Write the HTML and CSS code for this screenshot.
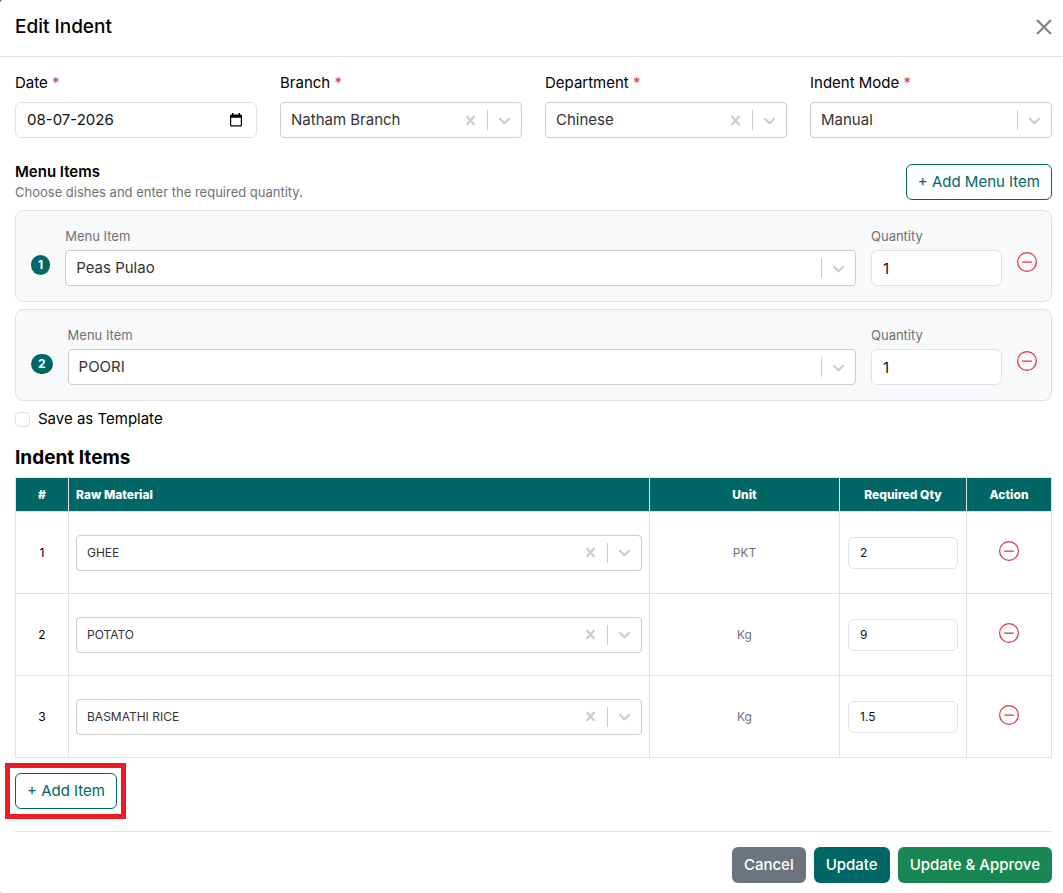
FILE: index.html
```html
<!DOCTYPE html>
<html lang="en">
<head>
<meta charset="utf-8">
<meta name="viewport" content="width=device-width, initial-scale=1">
<title>Edit Indent</title>
<link rel="stylesheet" href="styles.css">
</head>
<body>
<svg class="sprite" aria-hidden="true">
  <symbol id="cross" viewBox="0 0 20 20"><path d="M14.348 14.849c-0.469 0.469-1.229 0.469-1.697 0l-2.651-3.030-2.651 3.029c-0.469 0.469-1.229 0.469-1.697 0-0.469-0.469-0.469-1.229 0-1.697l2.758-3.15-2.759-3.152c-0.469-0.469-0.469-1.228 0-1.697s1.228-0.469 1.697 0l2.652 3.031 2.651-3.031c0.469-0.469 1.228-0.469 1.697 0s0.469 1.229 0 1.697l-2.758 3.152 2.758 3.15c0.469 0.469 0.469 1.229 0 1.698z"/></symbol>
  <symbol id="chevron" viewBox="0 0 20 20"><path d="M4.516 7.548c0.436-0.446 1.043-0.481 1.576 0l3.908 3.747 3.908-3.747c0.533-0.481 1.141-0.446 1.574 0 0.436 0.445 0.408 1.197 0 1.615-0.406 0.418-4.695 4.502-4.695 4.502-0.217 0.223-0.502 0.335-0.787 0.335s-0.57-0.112-0.789-0.335c0 0-4.287-4.084-4.695-4.502s-0.436-1.17 0-1.615z"/></symbol>
  <symbol id="minus-circle" viewBox="0 0 16 16"><path d="M8 15A7 7 0 1 1 8 1a7 7 0 0 1 0 14m0 1A8 8 0 1 0 8 0a8 8 0 0 0 0 16"/><path d="M4 8a.5.5 0 0 1 .5-.5h7a.5.5 0 0 1 0 1h-7A.5.5 0 0 1 4 8"/></symbol>
</svg>
<main class="dialog">
  <header class="dialog-header">
    <h1 class="title">Edit Indent</h1>
    <button class="icon-button close" type="button" aria-label="Close"><svg viewBox="0 0 16 16"><path d="M1 1l14 14M15 1L1 15"/></svg></button>
  </header>
  <form class="dialog-body">
    <div class="fields">
      <div class="field">
        <label for="date">Date <span class="required">*</span></label>
        <div class="control date-control">
          <input id="date" class="bare-input" type="text" value="08-07-2026">
          <button class="icon-button calendar" type="button" aria-label="Choose date"><svg viewBox="0 0 12 14"><path fill-rule="evenodd" d="M2 0h1.5v1.5h5V0H10v1.5h.8q1.2 0 1.2 1.2v9.600q0 1.200-1.200 1.200H1.200Q0 13.500 0 12.300V2.700Q0 1.500 1.200 1.500H2zM1.200 4.800v7.500h9.600V4.800z"/></svg></button>
        </div>
      </div>
      <div class="field">
        <label for="branch">Branch <span class="required">*</span></label>
        <div class="control picker">
          <select id="branch"><option>Natham Branch</option></select>
          <button class="icon-button indicator" type="button" aria-label="Clear branch"><svg><use href="#cross"/></svg></button>
          <span class="divider"></span><span class="indicator"><svg><use href="#chevron"/></svg></span>
        </div>
      </div>
      <div class="field">
        <label for="department">Department <span class="required">*</span></label>
        <div class="control picker">
          <select id="department"><option>Chinese</option></select>
          <button class="icon-button indicator" type="button" aria-label="Clear department"><svg><use href="#cross"/></svg></button>
          <span class="divider"></span><span class="indicator"><svg><use href="#chevron"/></svg></span>
        </div>
      </div>
      <div class="field">
        <label for="mode">Indent Mode <span class="required">*</span></label>
        <div class="control picker">
          <select id="mode"><option>Manual</option></select>
          <span class="divider"></span><span class="indicator"><svg><use href="#chevron"/></svg></span>
        </div>
      </div>
    </div>

    <section class="menu">
      <div class="menu-heading">
        <div>
          <h2 class="menu-title">Menu Items</h2>
          <p class="hint">Choose dishes and enter the required quantity.</p>
        </div>
        <button class="button outline" type="button">+ Add Menu Item</button>
      </div>
      <div class="card">
        <span class="badge">1</span>
        <div class="card-field grow">
          <label for="dish1">Menu Item</label>
          <div class="control picker">
            <select id="dish1"><option>Peas Pulao</option></select>
            <span class="divider"></span><span class="indicator"><svg><use href="#chevron"/></svg></span>
          </div>
        </div>
        <div class="card-field quantity">
          <label for="dishqty1">Quantity</label>
          <input id="dishqty1" class="control text-input" type="number" value="1">
        </div>
        <button class="icon-button remove" type="button" aria-label="Remove Peas Pulao"><svg><use href="#minus-circle"/></svg></button>
      </div>
      <div class="card">
        <span class="badge">2</span>
        <div class="card-field grow">
          <label for="dish2">Menu Item</label>
          <div class="control picker">
            <select id="dish2"><option>POORI</option></select>
            <span class="divider"></span><span class="indicator"><svg><use href="#chevron"/></svg></span>
          </div>
        </div>
        <div class="card-field quantity">
          <label for="dishqty2">Quantity</label>
          <input id="dishqty2" class="control text-input" type="number" value="1">
        </div>
        <button class="icon-button remove" type="button" aria-label="Remove POORI"><svg><use href="#minus-circle"/></svg></button>
      </div>
    </section>

    <div class="template">
      <input id="template" class="checkbox" type="checkbox">
      <label for="template">Save as Template</label>
    </div>

    <h2 class="items-title">Indent Items</h2>
    <table class="items">
      <thead>
        <tr><th class="col-number">#</th><th class="col-material">Raw Material</th><th class="col-unit">Unit</th><th class="col-qty">Required Qty</th><th class="col-action">Action</th></tr>
      </thead>
      <tbody>
        <tr>
          <td>1</td>
          <td><div class="control picker"><select aria-label="Raw material 1"><option>GHEE</option></select><button class="icon-button indicator" type="button" aria-label="Clear GHEE"><svg><use href="#cross"/></svg></button><span class="divider"></span><span class="indicator"><svg><use href="#chevron"/></svg></span></div></td>
          <td class="unit">PKT</td>
          <td><input class="text-input small" type="number" step="0.1" value="2" aria-label="Required quantity 1"></td>
          <td><button class="icon-button remove" type="button" aria-label="Remove GHEE"><svg><use href="#minus-circle"/></svg></button></td>
        </tr>
        <tr>
          <td>2</td>
          <td><div class="control picker"><select aria-label="Raw material 2"><option>POTATO</option></select><button class="icon-button indicator" type="button" aria-label="Clear POTATO"><svg><use href="#cross"/></svg></button><span class="divider"></span><span class="indicator"><svg><use href="#chevron"/></svg></span></div></td>
          <td class="unit">Kg</td>
          <td><input class="text-input small" type="number" step="0.1" value="9" aria-label="Required quantity 2"></td>
          <td><button class="icon-button remove" type="button" aria-label="Remove POTATO"><svg><use href="#minus-circle"/></svg></button></td>
        </tr>
        <tr>
          <td>3</td>
          <td><div class="control picker"><select aria-label="Raw material 3"><option>BASMATHI RICE</option></select><button class="icon-button indicator" type="button" aria-label="Clear BASMATHI RICE"><svg><use href="#cross"/></svg></button><span class="divider"></span><span class="indicator"><svg><use href="#chevron"/></svg></span></div></td>
          <td class="unit">Kg</td>
          <td><input class="text-input small" type="number" step="0.1" value="1.5" aria-label="Required quantity 3"></td>
          <td><button class="icon-button remove" type="button" aria-label="Remove BASMATHI RICE"><svg><use href="#minus-circle"/></svg></button></td>
        </tr>
      </tbody>
    </table>
    <div class="highlight"><button class="button outline" type="button">+ Add Item</button></div>
    <footer class="actions">
      <button class="button cancel" type="button">Cancel</button>
      <button class="button update" type="submit">Update</button>
      <button class="button approve" type="button">Update &amp; Approve</button>
    </footer>
  </form>
</main>
</body>
</html>
```
FILE: styles.css
```css
* { box-sizing: border-box; }

body {
  margin: 0;
  background: #444;
  color: #000;
  font: 15px/22px Inter, "Liberation Sans", sans-serif;
}

h1, h2, p { margin: 0; }
button, input, select { font: inherit; }
.sprite { display: none; }

.dialog {
  min-height: 100vh;
  background: #fff;
  border-radius: 3px 0 0 1px;
}

.dialog-header {
  display: flex;
  align-items: center;
  justify-content: space-between;
  height: 57px;
  padding: 0 11px 3px 15px;
  border-bottom: 1px solid #dee2e6;
}

.title { font-size: 19px; font-weight: 500; line-height: 28px; }

.icon-button {
  display: inline-flex;
  flex: none;
  padding: 0;
  border: 0;
  background: none;
  cursor: pointer;
}

.close svg {
  width: 16px;
  height: 16px;
  margin-top: 1px;
  fill: none;
  stroke: #7f7f7f;
  stroke-width: 2;
}

.dialog-body { padding: 15px 11px 10px 15px; }

.fields {
  display: grid;
  grid-template-columns: repeat(4, minmax(0, 1fr));
  gap: 23px;
}

.field label { display: block; margin-bottom: 8px; }
.required { color: #dc3545; }

.control { width: 100%; height: 36px; }

.date-control {
  display: flex;
  align-items: center;
  padding: 0 14px 0 11px;
  border: 1px solid #dee2e6;
  border-radius: 6px;
}

.bare-input {
  flex: 1;
  min-width: 0;
  padding: 0;
  border: 0;
  background: none;
  color: #111;
}

.calendar svg { width: 12px; height: 14px; fill: #000; }

.picker {
  display: flex;
  align-items: center;
  border: 1px solid #ccc;
  border-radius: 4px;
  background: #fff;
}

.picker select {
  flex: 1;
  min-width: 0;
  height: 34px;
  padding: 0 10px;
  border: 0;
  appearance: none;
  background: none;
  color: #333;
}

.indicator { display: inline-flex; padding: 0 7px; }
.indicator svg { width: 19px; height: 19px; fill: #ccc; }
.divider { width: 1px; height: 20px; background: #ccc; }

.menu-heading {
  display: flex;
  align-items: center;
  justify-content: space-between;
  margin: 23px 0 8px;
}

.menu-title { font-size: 15px; font-weight: 600; line-height: 21px; }
.hint { color: #707174; font-size: 13px; line-height: 20px; }

.button {
  height: 36px;
  padding: 0 11px;
  border: 1px solid transparent;
  border-radius: 6px;
  color: #fff;
  cursor: pointer;
}

.outline { border-color: #006766; background: #fff; color: #006766; }

.card {
  display: flex;
  align-items: flex-end;
  gap: 15px;
  padding: 15px 14px 15px 15px;
  border: 1px solid #dee2e6;
  border-radius: 8px;
  background: #f8f9fa;
}

.card + .card { margin-top: 7px; }

.badge {
  margin-bottom: 11px;
  padding: 0 7px;
  border-radius: 10px;
  background: #006766;
  color: #fff;
  font-size: 12px;
  font-weight: 700;
  line-height: 20px;
}

.grow { flex: 1; }
.quantity { width: 131px; }

.card-field label {
  display: block;
  margin-bottom: 4px;
  color: #707174;
  font-size: 13px;
  line-height: 20px;
}

.text-input {
  padding: 0 11px;
  border: 1px solid #dee2e6;
  border-radius: 6px;
  background: #fff;
  color: #111;
  appearance: textfield;
}

.remove { margin-bottom: 14px; }
.remove svg { width: 20px; height: 20px; fill: #dc3545; }

.template {
  display: flex;
  align-items: center;
  gap: 8px;
  margin-top: 7px;
}

.checkbox {
  width: 15px;
  height: 15px;
  margin: 0;
  border: 1px solid #dee2e6;
  border-radius: 4px;
  appearance: none;
}

.checkbox:checked { background: #006766; }

.items-title {
  margin: 14px 0 5px;
  font-size: 19px;
  font-weight: 700;
  line-height: 28px;
}

.items {
  width: 100%;
  border-collapse: collapse;
  table-layout: fixed;
  font-size: 12px;
  text-align: center;
}

.items th, .items td { padding: 0 8px; border: 1px solid #dee2e6; }
.items th { height: 34px; background: #006766; color: #fff; font-weight: 800; }
.items td { height: 82px; }
.items .col-material { padding: 0 7px; text-align: left; }
.col-number { width: 53px; }
.col-unit { width: 190px; }
.col-qty { width: 127px; }
.col-action { width: 85px; }
.items .unit { color: #707174; }
.items td:nth-child(2) { padding: 0 7px; }
.items .remove { margin-bottom: 4px; vertical-align: middle; }
.small { width: 100%; height: 32px; }

.highlight {
  width: fit-content;
  margin: 5px 0 12px -10px;
  padding: 5px 4px 5px 5px;
  border: 5px solid #ed1c24;
}

.highlight .button { display: block; }

.actions {
  display: flex;
  justify-content: flex-end;
  gap: 8px;
  padding-top: 15px;
  border-top: 1px solid #dee2e6;
}

.actions .button { font-weight: 500; }
.cancel { background: #6c757d; }
.update { background: #006766; }
.approve { background: #198754; }
```
